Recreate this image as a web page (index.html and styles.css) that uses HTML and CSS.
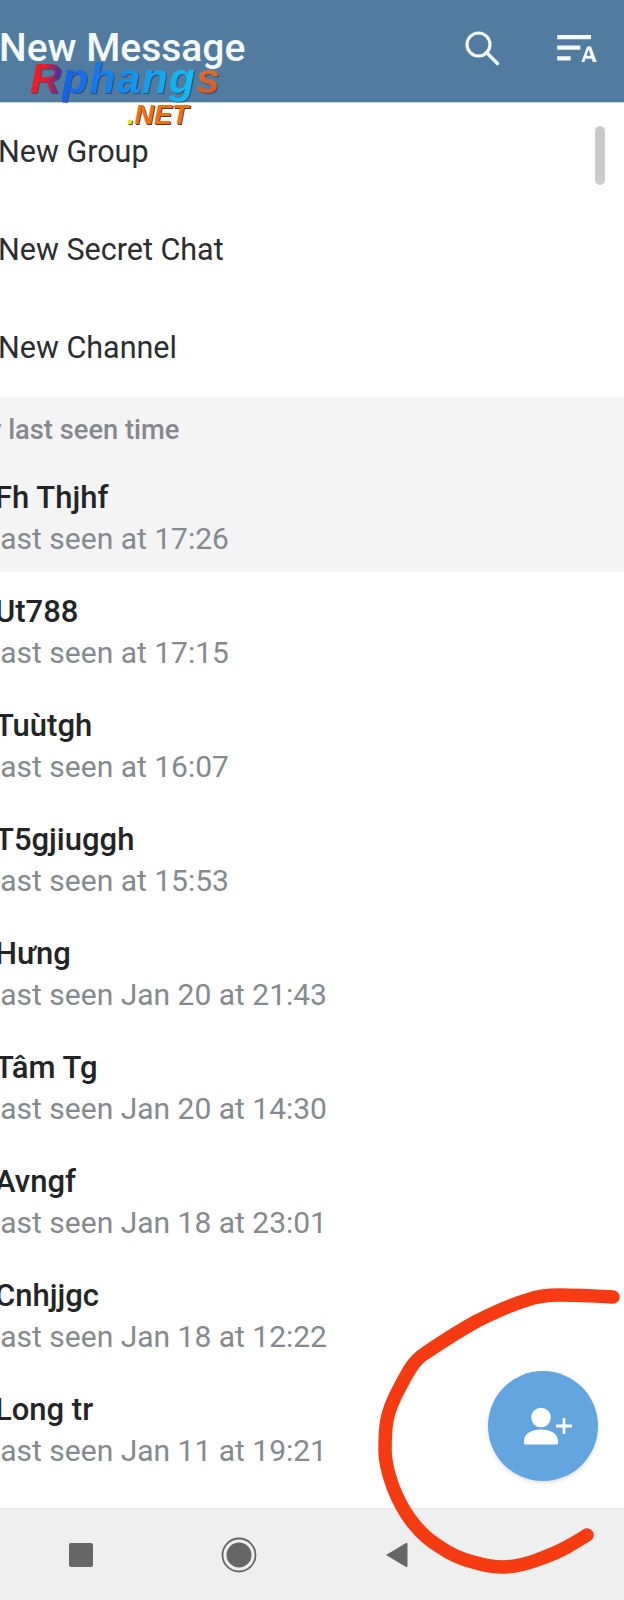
FILE: index.html
```html
<!DOCTYPE html>
<html lang="en">
<head>
<meta charset="utf-8">
<title>New Message</title>
<link rel="stylesheet" href="styles.css">
</head>
<body>
<div class="screen">
  <header class="appbar">
    <h1 class="appbar-title">New Message</h1>
    <div class="appbar-actions">
      <svg class="icon-search" viewBox="0 0 36 36" width="36" height="36"><circle cx="14.500" cy="14.500" r="11.500" fill="none" stroke="#f2fafd" stroke-width="3.200"/><path d="M22.500 22.500 33.500 33.500" fill="none" stroke="#f2fafd" stroke-width="3.400" stroke-linecap="round"/></svg>
      <svg class="icon-sort" viewBox="0 0 42 30" width="41" height="29"><path d="M1 1h35v4.400H1zM1 12h24v4.400H1zM1 23h14v4.400H1z" fill="#f2fafd"/><path d="M26 29 32 13h4l6 16h-4.200l-1.100-3.400h-6.400L29.200 29zM31.300 22.500h4.400L33.500 16z" fill="#f2fafd" fill-rule="evenodd"/></svg>
    </div>
  </header>
  <main class="content">
    <nav class="actions">
      <div class="action">New Group</div>
      <div class="action">New Secret Chat</div>
      <div class="action">New Channel</div>
    </nav>
    <div class="section-head">y last seen time</div>
    <ul class="contacts">
      <li class="contact is-active"><span class="name">Fh Thjhf</span><span class="seen">last seen at 17:26</span></li>
      <li class="contact"><span class="name">Ut788</span><span class="seen">last seen at 17:15</span></li>
      <li class="contact"><span class="name">Tuùtgh</span><span class="seen">last seen at 16:07</span></li>
      <li class="contact"><span class="name">T5gjiuggh</span><span class="seen">last seen at 15:53</span></li>
      <li class="contact"><span class="name">Hưng</span><span class="seen">last seen Jan 20 at 21:43</span></li>
      <li class="contact"><span class="name">Tâm Tg</span><span class="seen">last seen Jan 20 at 14:30</span></li>
      <li class="contact"><span class="name">Avngf</span><span class="seen">last seen Jan 18 at 23:01</span></li>
      <li class="contact"><span class="name">Cnhjjgc</span><span class="seen">last seen Jan 18 at 12:22</span></li>
      <li class="contact"><span class="name">Long tr</span><span class="seen">last seen Jan 11 at 19:21</span></li>
    </ul>
  </main>
  <footer class="navbar">
    <span class="nav-square"></span>
    <svg viewBox="0 0 36 36" width="36" height="36"><circle cx="18" cy="18" r="16.500" fill="none" stroke="#666" stroke-width="1.800"/><circle cx="18" cy="18" r="12.500" fill="#666"/></svg>
    <svg viewBox="0 0 23 26" width="23" height="26"><path d="M1 13 21 1a1 1 0 0 1 1.500 1v22a1 1 0 0 1-1.500 1z" fill="#666"/></svg>
  </footer>
  <div class="scrollthumb"></div>
  <div class="watermark"><span class="wm-main"><span class="wm-r">R</span><span class="wm-p">phang</span><span class="wm-s">s</span></span><span class="wm-net"><span class="wm-dot">.</span>NET</span></div>
  <button class="fab" type="button" aria-label="Add contact">
    <svg viewBox="0 0 50 38" width="50" height="38"><circle cx="18" cy="10.500" r="9.800" fill="#fff"/><path d="M1 36v-3c1-7 8-10.500 17-10.500s16 3.500 17 10.500v3a1.500 1.500 0 0 1-1.500 1.500h-31A1.500 1.500 0 0 1 1 36z" fill="#fff"/><path d="M33 19h16M41 11v16" stroke="#fff" stroke-width="2.800" fill="none"/></svg>
  </button>
  <svg class="scribble" viewBox="0 0 624 1600" width="624" height="1600"><path d="M613 1297C595 1296 575 1295 560 1295 545 1295 535 1297 527 1300 510 1305 495 1312 477 1321 455 1333 436 1346 424 1354 412 1362 406 1376 400 1387 394 1398 389 1409 387 1420 385 1430 385 1440 385 1450 385 1464 389 1476 393 1487 398 1500 405 1513 413 1523 421 1533 430 1541 440 1547 450 1554 461 1559 473 1562 483 1565 493 1567 503 1567 515 1567 526 1564 537 1560 548 1556 558 1552 567 1547 574 1543 581 1539 587 1535" fill="none" stroke="#f63b12" stroke-width="13.500" stroke-linecap="round" stroke-linejoin="round"/></svg>
</div>
</body>
</html>
```
FILE: styles.css
```css
* { box-sizing: border-box; }
html, body { margin: 0; padding: 0; }
body { font-family: Roboto, "Liberation Sans", sans-serif; background: #fff; }
.screen { position: relative; width: 624px; height: 1600px; overflow: hidden; display: flex; flex-direction: column; background: #fff; }
.appbar { flex: 0 0 103px; background: #527ba0; border-bottom: 1px solid #c3d6e6; display: flex; align-items: flex-start; justify-content: space-between; }
.appbar-title { margin: 26px 0 0 -1px; font-size: 39px; line-height: 44px; font-weight: 500; color: #f4fbfe; white-space: nowrap; }
.appbar-actions { display: flex; align-items: center; gap: 56px; padding: 30px 27px 0 0; }
.content { flex: 1; min-height: 0; }
.actions { height: 294px; }
.action { height: 98px; padding-bottom: 2px; display: flex; align-items: center; font-size: 30.500px; color: #2b2d30; margin-left: -2px; }
.section-head { height: 61px; padding-top: 4px; background: #f4f4f5; font-size: 27.300px; font-weight: 500; color: #85898d; display: flex; align-items: center; text-indent: -12px; }
.contacts { list-style: none; margin: 0; padding: 0; }
.contact { height: 114px; padding: 19px 0 0 0; display: flex; flex-direction: column; text-indent: -5px; }
.contact.is-active { background: #f4f4f5; }
.name { font-size: 31px; line-height: 42px; font-weight: 500; color: #222426; }
.seen { font-size: 30px; line-height: 40px; color: #858a8f; text-indent: -7px; }
.navbar { flex: 0 0 92px; background: #efefef; border-top: 1px solid #e6e6e6; display: flex; align-items: center; justify-content: space-between; padding-left: 69px; padding-right: 216px; }
.nav-square { width: 24px; height: 24px; background: #666; border-radius: 2px; }
.scrollthumb { position: absolute; left: 595px; top: 126px; width: 10px; height: 59px; border-radius: 5px; background: #c9c9ce; }
.watermark { position: absolute; left: 30px; top: 55px; width: 190px; height: 75px; font-family: "Liberation Sans", sans-serif; font-style: italic; font-weight: 700; }
.wm-main { position: absolute; left: 0; top: 0; font-size: 43px; line-height: 46px; white-space: nowrap; letter-spacing: 1px; filter: drop-shadow(1px 1px 0 rgba(20,30,60,.5)); }
.wm-r, .wm-p, .wm-s { -webkit-background-clip: text; background-clip: text; color: transparent; padding-right: 2px; margin-right: -2px; }
.wm-r { background-image: linear-gradient(90deg, #ee1c25 45%, #2233c0 100%); }
.wm-p { background-image: linear-gradient(90deg, #1560e8, #11c4f5); }
.wm-s { background-image: linear-gradient(180deg, #e0763e, #d9551c); }
.wm-net { position: absolute; left: 97px; top: 46px; font-size: 27px; line-height: 28px; color: #ef6f12; white-space: nowrap; text-shadow: 1px 1px 0 #5b3a1a; }
.wm-dot { color: #e8e020; }
.fab { position: absolute; left: 488px; top: 1371px; width: 110px; height: 110px; border: 0; padding: 0 0 0 9px; border-radius: 50%; background: #63a5df; box-shadow: 0 2px 4px rgba(0,0,0,.12); display: flex; align-items: center; justify-content: center; }
.scribble { position: absolute; left: 0; top: 0; pointer-events: none; }
```
